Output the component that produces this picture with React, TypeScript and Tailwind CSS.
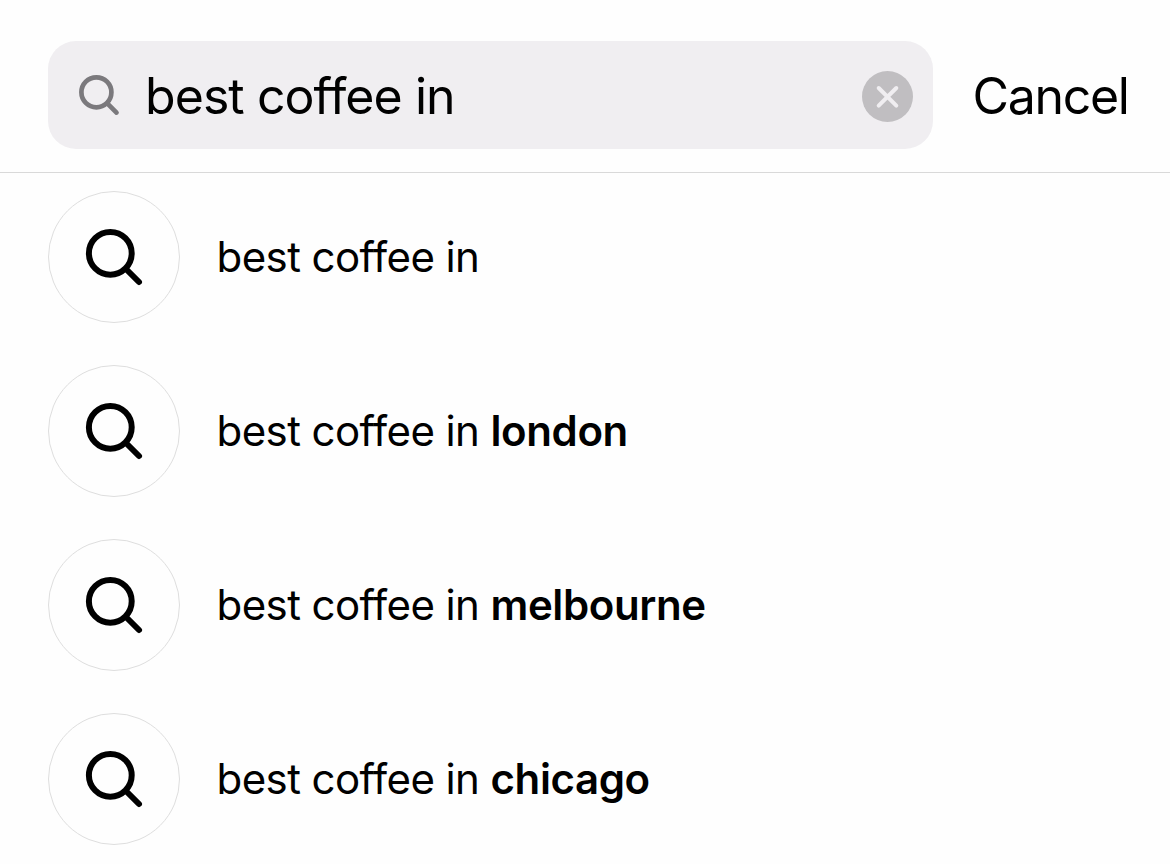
const suggestions = ["", "london", "melbourne", "chicago"];
const query = "best coffee in";

function SearchIcon() {
  return (
    <svg viewBox="0 0 60 60" className="size-[60px]" fill="none" stroke="#000" strokeWidth="6" strokeLinecap="round">
      <circle cx="26.3" cy="26.3" r="21.4" />
      <path d="M42 42 55 55" />
    </svg>
  );
}

function SearchBar() {
  return (
    <header className="flex h-[173px] items-start border-b border-[#d9d9d9] pt-[41px] pl-12">
      <div className="flex h-[108px] w-[885px] items-center rounded-[28px] bg-[#f0eef1] pr-5 pl-[30px]">
        <svg viewBox="0 0 42 42" className="size-[42px] shrink-0" fill="none" stroke="#7b797d" strokeWidth="4.7" strokeLinecap="round">
          <circle cx="18.4" cy="18.3" r="15" />
          <path d="m29.3 29.3 9.2 9.3" />
        </svg>
        <span className="ml-[25px] flex-1 pt-[2px] text-[50px] leading-none tracking-[-0.93px] whitespace-nowrap">{query}</span>
        <svg viewBox="0 0 51 51" className="mt-[3px] size-[51px] shrink-0">
          <circle cx="25.5" cy="25.5" r="25.5" fill="#c0bec1" />
          <path d="m16.7 17 17.6 17.6m0-17.6L16.7 34.6" stroke="#f0eef1" strokeWidth="4" strokeLinecap="round" />
        </svg>
      </div>
      <span className="ml-[39.5px] flex h-[108px] items-center pt-[2px] text-[50px] leading-none tracking-[-1.3px]">Cancel</span>
    </header>
  );
}

export default function App() {
  return (
    <main className="h-[864px] w-[1170px] overflow-hidden bg-[#fefefe] font-['Inter',sans-serif] text-black">
      <SearchBar />
      <ul className="flex flex-col gap-[42px] pt-[18px] pl-12">
        {suggestions.map((place) => (
          <li key={place} className="flex h-[132px] items-center">
            <span className="flex size-[132px] items-center justify-center rounded-full border border-[#dedede]">
              <SearchIcon />
            </span>
            <span className="ml-[36.6px] text-[42px] leading-none tracking-[-0.6px] whitespace-nowrap">
              {query} <b className="font-semibold tracking-[-0.4px]">{place}</b>
            </span>
          </li>
        ))}
      </ul>
    </main>
  );
}
